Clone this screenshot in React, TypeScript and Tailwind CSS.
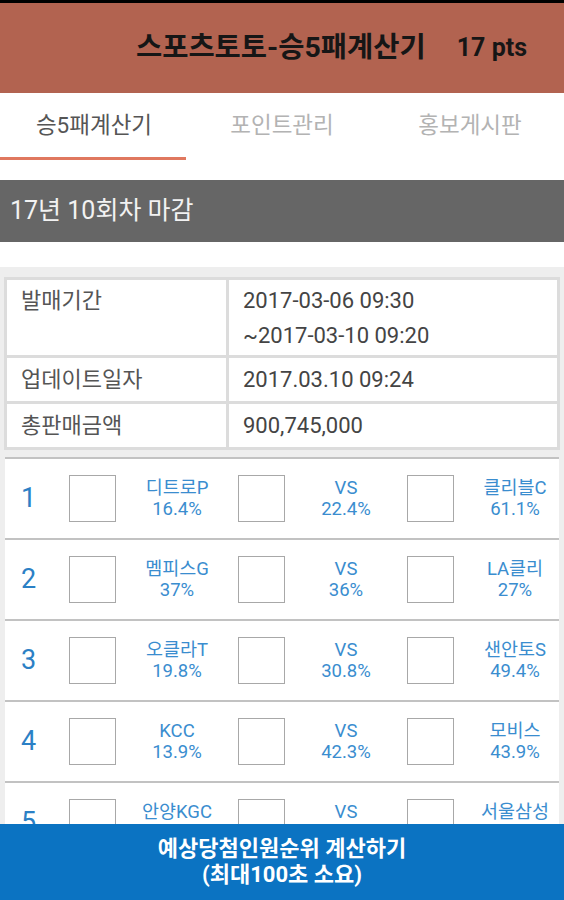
import React from 'react';

const FONT = { fontFamily: 'Roboto, "Noto Sans CJK KR", sans-serif' };

interface Match {
  no: number;
  home: string;
  homePct: string;
  drawPct: string;
  away: string;
  awayPct: string;
}

const MATCHES: Match[] = [
  { no: 1, home: '디트로P', homePct: '16.4%', drawPct: '22.4%', away: '클리블C', awayPct: '61.1%' },
  { no: 2, home: '멤피스G', homePct: '37%', drawPct: '36%', away: 'LA클리', awayPct: '27%' },
  { no: 3, home: '오클라T', homePct: '19.8%', drawPct: '30.8%', away: '샌안토S', awayPct: '49.4%' },
  { no: 4, home: 'KCC', homePct: '13.9%', drawPct: '42.3%', away: '모비스', awayPct: '43.9%' },
  { no: 5, home: '안양KGC', homePct: '22.1%', drawPct: '31.5%', away: '서울삼성', awayPct: '46.4%' },
];

const TABS = ['승5패계산기', '포인트관리', '홍보게시판'];

const Pick = ({ label, pct }: { label: string; pct: string }) => (
  <div className="flex items-center shrink-0 w-[169px]">
    <div className="w-[47px] h-[47px] shrink-0 border-[1.5px] border-[#a8a8a8] bg-white" />
    <div className="w-[122px] shrink-0 text-center text-[18.5px] leading-[21px] text-[#3a8dcf] whitespace-nowrap">
      <div>{label}</div>
      <div>{pct}</div>
    </div>
  </div>
);

export default function App() {
  return (
    <div className="h-[900px] w-full flex flex-col overflow-hidden bg-white" style={FONT}>
      {/* Status strip + toolbar */}
      <div className="h-[3px] bg-black shrink-0" />
      <div className="h-[90px] shrink-0 bg-[#b26350] flex items-center justify-end pr-[37px] gap-[31px] font-bold text-[#161616]">
        <span className="text-[28.5px]">스포츠토토-승5패계산기</span>
        <span className="text-[25px]">17 pts</span>
      </div>

      {/* Tabs */}
      <div className="h-[87px] shrink-0 flex flex-col">
        <div className="flex h-[64px]">
          {TABS.map((t, i) => (
            <div
              key={t}
              className={`flex-1 flex items-center justify-center pt-[1px] text-[22.5px] ${
                i === 0 ? 'text-[#555]' : 'text-[#b3b3b3]'
              }`}
            >
              {t}
            </div>
          ))}
        </div>
        <div className="h-[3px] w-[186px] bg-[#e0785f]" />
      </div>

      {/* Round title */}
      <div className="h-[62px] shrink-0 bg-[#666666] flex items-center pl-[10px] text-[25px] text-[#f2f2f2]">
        17년 10회차 마감
      </div>
      <div className="h-[25px] shrink-0 bg-white" />

      {/* Content */}
      <div className="flex-1 min-h-0 overflow-hidden bg-[#eeeeee] px-[4px] pt-[10px]">
        <div className="grid grid-cols-[219px_1fr] gap-[3px] p-[3px] bg-[#dcdcdc] text-[22px] text-[#555] leading-[35px]">
          <div className="bg-white pl-[14px] pt-[3px] h-[75px]">발매기간</div>
          <div className="bg-white pl-[14px] pt-[3px] h-[75px] text-[#444]">
            <div>2017-03-06 09:30</div>
            <div>~2017-03-10 09:20</div>
          </div>
          <div className="bg-white pl-[14px] pt-[4px] h-[43px]">업데이트일자</div>
          <div className="bg-white pl-[14px] pt-[4px] h-[43px] text-[#444]">2017.03.10 09:24</div>
          <div className="bg-white pl-[14px] pt-[4px] h-[43px]">총판매금액</div>
          <div className="bg-white pl-[14px] pt-[4px] h-[43px] text-[#444]">900,745,000</div>
        </div>

        <div className="mt-[7px] mx-[1px]">
          {MATCHES.map((m) => (
            <div
              key={m.no}
              className="h-[81px] border-t-2 border-[#c2c2c2] bg-white flex items-center overflow-hidden"
            >
              <div className="w-[64px] shrink-0 pl-[16px] text-[27px] text-[#2b80c5]">{m.no}</div>
              <Pick label={m.home} pct={m.homePct} />
              <Pick label="VS" pct={m.drawPct} />
              <Pick label={m.away} pct={m.awayPct} />
            </div>
          ))}
        </div>
      </div>

      {/* Calculate button */}
      <button className="h-[76px] shrink-0 bg-[#0b73c2] text-white font-bold text-[22px] leading-[26px] flex flex-col items-center justify-center">
        <span>예상당첨인원순위 계산하기</span>
        <span>(최대100초 소요)</span>
      </button>
    </div>
  );
}
